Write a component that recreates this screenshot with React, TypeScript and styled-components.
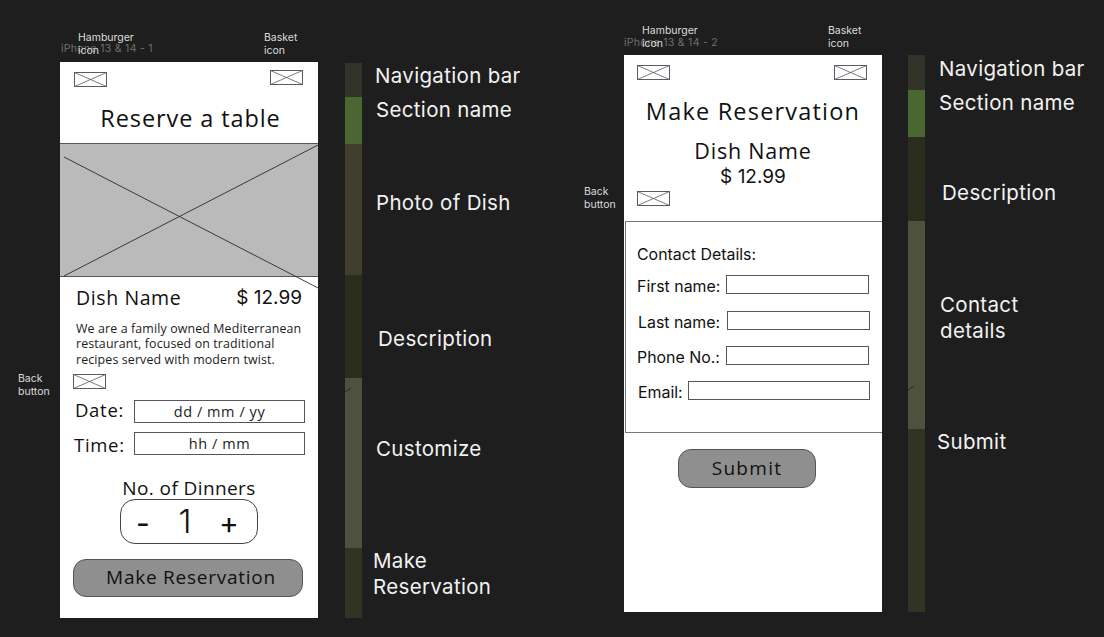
import styled, { createGlobalStyle } from 'styled-components';

const Global = createGlobalStyle`
  html, body {
    margin: 0;
    padding: 0;
    background: #1e1e1e;
  }
`;

const display = `"Open Sans", "Noto Sans", sans-serif`;
const ui = `Inter, "Liberation Sans", sans-serif`;

const Canvas = styled.div`
  position: relative;
  width: 1104px;
  height: 637px;
  overflow: hidden;
  background: #1e1e1e;
  font-family: ${ui};
`;

const Artboard = styled.div<{ $x: number; $y: number; $h: number }>`
  position: absolute;
  left: ${(p) => p.$x}px;
  top: ${(p) => p.$y}px;
  width: 258px;
  height: ${(p) => p.$h}px;
  background: #fff;
  color: #111;
  display: flex;
  flex-direction: column;
`;

const FrameLabel = styled.span<{ $x: number; $y: number }>`
  position: absolute;
  left: ${(p) => p.$x}px;
  top: ${(p) => p.$y}px;
  font-size: 10.5px;
  line-height: 13px;
  letter-spacing: 0.3px;
  color: #6f6f6f;
`;

const Note = styled.span<{ $x: number; $y: number }>`
  position: absolute;
  left: ${(p) => p.$x}px;
  top: ${(p) => p.$y}px;
  font-size: 10.5px;
  line-height: 12.5px;
  white-space: nowrap;
  color: #dcdcdc;
`;

const Caption = styled.span<{ $x: number; $y: number }>`
  position: absolute;
  left: ${(p) => p.$x}px;
  top: ${(p) => p.$y}px;
  font-size: 20.5px;
  line-height: 26px;
  letter-spacing: 0.33px;
  color: #f2f2f2;
`;

const Strip = styled.div<{ $x: number; $y: number }>`
  position: absolute;
  left: ${(p) => p.$x}px;
  top: ${(p) => p.$y}px;
  width: 17px;
  display: flex;
  flex-direction: column;
`;

const Segment = styled.div<{ $h: number; $c: string }>`
  height: ${(p) => p.$h}px;
  background: ${(p) => p.$c};
`;

const NavRow = styled.div<{ $left: number; $basketLift: number }>`
  display: flex;
  justify-content: space-between;
  align-items: flex-start;
  padding: 10px 15px 0 ${(p) => p.$left}px;

  & > svg:last-child {
    margin-top: ${(p) => -p.$basketLift}px;
  }
`;

const Title = styled.h1<{ $track: number; $shift: number }>`
  margin: 15px 0 0;
  padding-left: ${(p) => p.$shift}px;
  font-family: ${display};
  font-weight: 400;
  font-size: 23.5px;
  line-height: 32px;
  letter-spacing: ${(p) => p.$track}px;
  text-align: center;
  color: #111;
`;

const Photo = styled.div`
  position: relative;
  box-sizing: border-box;
  height: 134px;
  margin-top: 9px;
  background: #bababa;
  border-top: 1px solid #55555f;
  border-bottom: 1px solid #55555f;
`;

const PhotoCross = styled.svg`
  position: absolute;
  left: 0;
  top: -1px;
  width: 258px;
  height: 134px;
  overflow: visible;
`;

const DishRow = styled.div`
  display: flex;
  justify-content: space-between;
  align-items: center;
  padding: 8px 16px 0 16px;
  height: 26px;
`;

const DishName = styled.span`
  font-family: ${display};
  font-size: 19.5px;
  line-height: 26px;
  letter-spacing: 0.6px;
`;

const Price = styled.span`
  font-family: ${ui};
  font-size: 19px;
  line-height: 26px;
`;

const Blurb = styled.p`
  margin: 10px 0 0;
  padding: 0 15px 0 16px;
  font-family: ${display};
  font-size: 12.4px;
  line-height: 15.3px;
  letter-spacing: 0.13px;
  white-space: nowrap;
  color: #1c1c1c;
`;

const BackIcon = styled.div<{ $top: number }>`
  display: flex;
  margin: ${(p) => p.$top}px 0 0 13px;
`;

const SlotRow = styled.div<{ $top: number }>`
  display: flex;
  align-items: center;
  justify-content: space-between;
  margin-top: ${(p) => p.$top}px;
  padding: 0 13px 0 14px;
`;

const SlotLabel = styled.span<{ $up?: number; $down?: number; $indent?: number }>`
  padding: ${(p) => p.$down ?? 0}px 0 ${(p) => p.$up ?? 0}px ${(p) => p.$indent ?? 0}px;
  font-family: ${display};
  font-size: 18.5px;
  line-height: 16px;
  letter-spacing: 0.7px;
`;

const Slot = styled.div`
  box-sizing: border-box;
  width: 171px;
  height: 23px;
  border: 1px solid #55555a;
  display: flex;
  align-items: center;
  justify-content: center;
  font-family: ${display};
  font-size: 14.5px;
  letter-spacing: 0.55px;
  color: #1c1c1c;
`;

const DinersTitle = styled.div`
  margin-top: 21px;
  text-align: center;
  font-family: ${display};
  font-size: 19px;
  line-height: 24px;
  letter-spacing: 0.4px;
`;

const Stepper = styled.div`
  box-sizing: border-box;
  align-self: center;
  width: 138px;
  height: 45px;
  margin-top: -1px;
  border: 1px solid #444;
  border-radius: 15px;
  display: grid;
  grid-template-columns: 44px 40px 48px;
  align-items: center;
  justify-items: center;
  font-family: ${ui};
`;

const StepSign = styled.span<{ $size: number }>`
  font-size: ${(p) => p.$size}px;
  line-height: 30px;
  margin-top: 3px;
`;

const StepValue = styled.span`
  font-size: 33px;
  font-weight: 300;
  line-height: 40px;
`;

const PillButton = styled.button<{ $w: number; $h: number; $top: number; $left: number; $shift: number; $track: number }>`
  box-sizing: border-box;
  align-self: flex-start;
  width: ${(p) => p.$w}px;
  height: ${(p) => p.$h}px;
  margin: ${(p) => p.$top}px 0 0 ${(p) => p.$left}px;
  padding: 0 0 2px ${(p) => p.$shift}px;
  background: #8f8f8f;
  border: 1px solid #555;
  border-radius: 13px;
  font-family: ${display};
  font-size: 19px;
  letter-spacing: ${(p) => p.$track}px;
  color: #111;
`;

const CenterLine = styled.div<{ $top: number; $size: number; $ui?: boolean }>`
  margin-top: ${(p) => p.$top}px;
  text-align: center;
  font-family: ${(p) => (p.$ui ? ui : display)};
  font-size: ${(p) => p.$size}px;
  line-height: 26px;
  letter-spacing: ${(p) => (p.$ui ? 0 : 0.8)}px;
`;

const ContactBox = styled.section`
  box-sizing: border-box;
  height: 212px;
  margin: 15px 0 0 1px;
  padding: 24px 11px 0 11px;
  border: 1px solid #77777d;
  border-right: none;
  display: flex;
  flex-direction: column;
`;

const ContactHeading = styled.div`
  font-size: 15.9px;
  line-height: 18px;
`;

const Field = styled.div<{ $top: number; $indent: number }>`
  display: flex;
  align-items: center;
  margin-top: ${(p) => p.$top}px;
  margin-left: ${(p) => p.$indent}px;
`;

const FieldLabel = styled.span<{ $w: number }>`
  width: ${(p) => p.$w}px;
  font-size: 15.9px;
  line-height: 18px;
  white-space: nowrap;
`;

const FieldInput = styled.div<{ $w: number }>`
  box-sizing: border-box;
  width: ${(p) => p.$w}px;
  height: 19px;
  margin-top: -5px;
  border: 1px solid #55555a;
`;

const Tick = styled.svg<{ $top: number }>`
  position: absolute;
  left: 0;
  top: ${(p) => p.$top}px;
  width: 8px;
  height: 6px;
`;

const Placeholder = () => (
  <svg width="33" height="15" viewBox="0 0 33 15" fill="none" stroke="#5a5a62" strokeWidth="1">
    <rect x="0.5" y="0.5" width="32" height="14" />
    <path d="M0.5 0.5 L32.5 14.5 M32.5 0.5 L0.5 14.5" strokeWidth="0.8" />
  </svg>
);

const stripOne = [
  { h: 34, c: '#33332a' },
  { h: 47, c: '#4a6732' },
  { h: 131, c: '#3f3f2c' },
  { h: 103, c: '#2c2c1d' },
  { h: 170, c: '#50503f' },
  { h: 70, c: '#333325' },
];

const stripTwo = [
  { h: 35, c: '#33332a' },
  { h: 47, c: '#4a6732' },
  { h: 84, c: '#2c2c1d' },
  { h: 208, c: '#50503f' },
  { h: 183, c: '#333325' },
];

const fields = [
  { label: 'First name:', top: 14, indent: 0, labelW: 89, w: 143 },
  { label: 'Last name:', top: 18, indent: 1, labelW: 89, w: 143 },
  { label: 'Phone No.:', top: 17, indent: 0, labelW: 89, w: 143 },
  { label: 'Email:', top: 17, indent: 1, labelW: 50, w: 182 },
];

export default function App() {
  return (
    <Canvas>
      <Global />

      <FrameLabel $x={61} $y={42}>iPhone 13 &amp; 14 - 1</FrameLabel>
      <Note $x={78} $y={32}>Hamburger<br />icon</Note>
      <Note $x={264} $y={32}>Basket<br />icon</Note>
      <Note $x={18} $y={373}>Back<br />button</Note>

      <Artboard $x={60} $y={62} $h={556}>
        <NavRow $left={14} $basketLift={2}>
          <Placeholder />
          <Placeholder />
        </NavRow>
        <Title $track={0.9} $shift={3}>Reserve a table</Title>
        <Photo>
          <PhotoCross viewBox="0 0 258 134" fill="none" stroke="#2a2a2a" strokeWidth="0.9">
            <path d="M4 14 L262 147 M4 133 L260 1" />
          </PhotoCross>
        </Photo>
        <DishRow>
          <DishName>Dish Name</DishName>
          <Price>$ 12.99</Price>
        </DishRow>
        <Blurb>
          We are a family owned Mediterranean
          <br />
          restaurant, focused on traditional
          <br />
          recipes served with modern twist.
        </Blurb>
        <BackIcon $top={7}>
          <Placeholder />
        </BackIcon>
        <SlotRow $top={11}>
          <SlotLabel $up={2} $indent={1}>Date:</SlotLabel>
          <Slot>dd / mm / yy</Slot>
        </SlotRow>
        <SlotRow $top={9}>
          <SlotLabel $down={3}>Time:</SlotLabel>
          <Slot>hh / mm</Slot>
        </SlotRow>
        <DinersTitle>No. of Dinners</DinersTitle>
        <Stepper>
          <StepSign $size={30}>-</StepSign>
          <StepValue>1</StepValue>
          <StepSign $size={30}>+</StepSign>
        </Stepper>
        <PillButton $w={230} $h={38} $top={15} $left={13} $shift={6} $track={0.75}>
          Make Reservation
        </PillButton>
      </Artboard>

      <Strip $x={345} $y={63}>
        {stripOne.map((s) => (
          <Segment key={s.c + s.h} $h={s.h} $c={s.c} />
        ))}
        <Tick $top={324} viewBox="0 0 8 6" fill="none" stroke="#2a2a2a">
          <path d="M0 5 L6 1" />
        </Tick>
      </Strip>

      <Caption $x={375} $y={63}>Navigation bar</Caption>
      <Caption $x={376} $y={97}>Section name</Caption>
      <Caption $x={376} $y={190}>Photo of Dish</Caption>
      <Caption $x={378} $y={326}>Description</Caption>
      <Caption $x={376} $y={436}>Customize</Caption>
      <Caption $x={373} $y={548}>
        Make
        <br />
        Reservation
      </Caption>

      <FrameLabel $x={624} $y={36}>iPhone 13 &amp; 14 - 2</FrameLabel>
      <Note $x={642} $y={25}>Hamburger<br />icon</Note>
      <Note $x={828} $y={25}>Basket<br />icon</Note>
      <Note $x={584} $y={186}>Back<br />button</Note>

      <Artboard $x={624} $y={55} $h={557}>
        <NavRow $left={13} $basketLift={0}>
          <Placeholder />
          <Placeholder />
        </NavRow>
        <Title $track={1.2} $shift={0}>Make Reservation</Title>
        <CenterLine $top={11} $size={21.5}>Dish Name</CenterLine>
        <CenterLine $top={0} $size={19} $ui>$ 12.99</CenterLine>
        <BackIcon $top={1}>
          <Placeholder />
        </BackIcon>
        <ContactBox>
          <ContactHeading>Contact Details:</ContactHeading>
          {fields.map((f) => (
            <Field key={f.label} $top={f.top} $indent={f.indent}>
              <FieldLabel $w={f.labelW}>{f.label}</FieldLabel>
              <FieldInput $w={f.w} />
            </Field>
          ))}
        </ContactBox>
        <PillButton $w={138} $h={39} $top={16} $left={54} $shift={0} $track={1.3}>
          Submit
        </PillButton>
      </Artboard>

      <Strip $x={908} $y={55}>
        {stripTwo.map((s) => (
          <Segment key={s.c + s.h} $h={s.h} $c={s.c} />
        ))}
        <Tick $top={330} viewBox="0 0 8 6" fill="none" stroke="#2a2a2a">
          <path d="M0 5 L6 1" />
        </Tick>
      </Strip>

      <Caption $x={939} $y={56}>Navigation bar</Caption>
      <Caption $x={939} $y={90}>Section name</Caption>
      <Caption $x={942} $y={180}>Description</Caption>
      <Caption $x={940} $y={292}>
        Contact
        <br />
        details
      </Caption>
      <Caption $x={937} $y={429}>Submit</Caption>
    </Canvas>
  );
}
